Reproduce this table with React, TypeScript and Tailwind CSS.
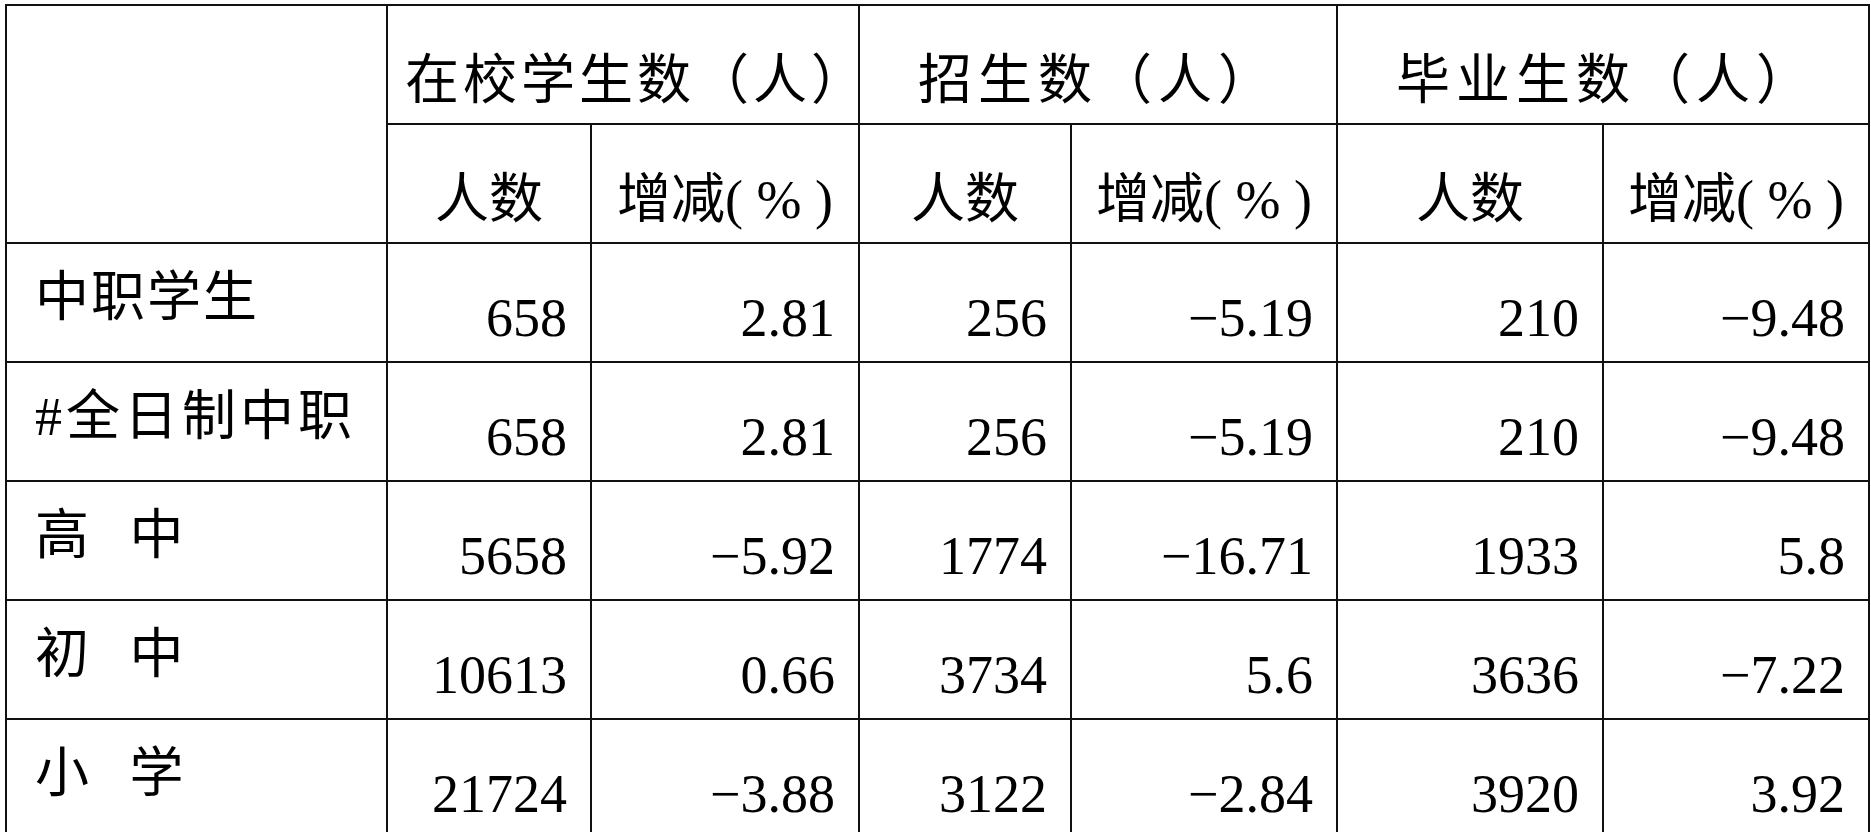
import React from "react";

type Row = { label: React.ReactNode; vals: string[]; labelCls?: string };

const rows: Row[] = [
  { label: "中职学生", vals: ["658", "2.81", "256", "−5.19", "210", "−9.48"], labelCls: "tracking-[2px]" },
  { label: "#全日制中职", vals: ["658", "2.81", "256", "−5.19", "210", "−9.48"], labelCls: "tracking-[4px]" },
  { label: "高 中", vals: ["5658", "−5.92", "1774", "−16.71", "1933", "5.8"] },
  { label: "初 中", vals: ["10613", "0.66", "3734", "5.6", "3636", "−7.22"] },
  { label: "小 学", vals: ["21724", "−3.88", "3122", "−2.84", "3920", "3.92"] },
];

const font = "font-['Liberation_Serif','Noto_Sans_CJK_SC',serif]";

export default function App() {
  return (
    <div className={`h-[832px] w-[1871px] overflow-hidden bg-white pt-[4px] pl-[5px] text-black ${font}`}>
      <div className="grid w-[1865px] grid-cols-[381px_204px_268px_212px_266px_266px_266px] auto-rows-[119px] border-l-2 border-t-2 border-[#111] text-[54px] leading-none">
        {/* header row 1 */}
        <div className="row-span-2 border-b-2 border-r-2 border-[#111]" />
        <div className="col-span-2 flex items-end justify-center border-b-2 border-r-2 border-[#111] pb-[15px] pl-[28px] tracking-[4px] whitespace-nowrap">
          在校学生数（人）
        </div>
        <div className="col-span-2 flex items-end justify-center border-b-2 border-r-2 border-[#111] pb-[15px] tracking-[6px] whitespace-nowrap">
          招生数（人）
        </div>
        <div className="col-span-2 flex items-end justify-center border-b-2 border-r-2 border-[#111] pb-[15px] pl-[6px] tracking-[6px] whitespace-nowrap">
          毕业生数（人）
        </div>
        {/* header row 2 */}
        {[0, 1, 2].map((i) => (
          <React.Fragment key={i}>
            <div className="flex items-end justify-center border-b-2 border-r-2 border-[#111] pb-[15px] whitespace-nowrap">
              人数
            </div>
            <div className="flex items-end justify-center border-b-2 border-r-2 border-[#111] pb-[15px] whitespace-nowrap">
              增减( % )
            </div>
          </React.Fragment>
        ))}
        {/* data rows */}
        {rows.map((r, ri) => (
          <React.Fragment key={ri}>
            <div
              className={`flex items-start border-b-2 border-r-2 border-[#111] pl-[28px] pt-[27px] whitespace-pre [word-spacing:27px] ${r.labelCls ?? ""}`}
            >
              {r.label}
            </div>
            {r.vals.map((v, vi) => (
              <div
                key={vi}
                className="flex items-end justify-end border-b-2 border-r-2 border-[#111] pb-[16px] pr-[23px] whitespace-nowrap"
              >
                {v}
              </div>
            ))}
          </React.Fragment>
        ))}
      </div>
    </div>
  );
}
